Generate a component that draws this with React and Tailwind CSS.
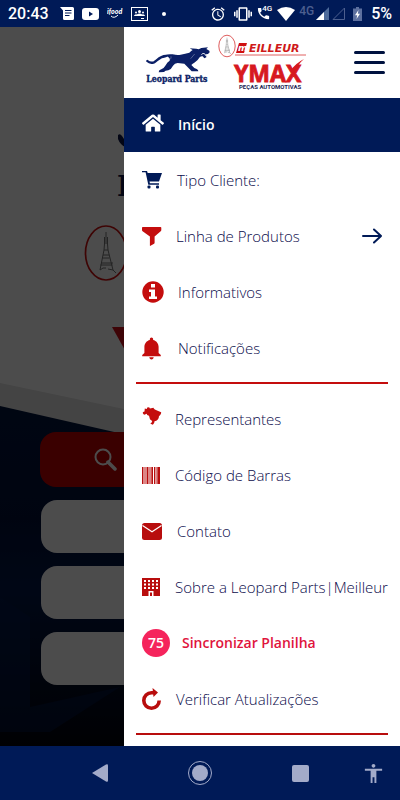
import { FaHome } from 'react-icons/fa';
import { IoMdNotifications } from 'react-icons/io';
import { GiBrazil } from 'react-icons/gi';
import { MdAlarm, MdVibration, MdPhoneInTalk, MdAccessibility } from 'react-icons/md';

const CartIcon = () => (
  <svg width="20" height="18" viewBox="0 0 20 18" fill="#001a57">
    <path d="M0 0h5l.7 2H20l-3 8.500H7.500l.4 1.700H17v1.500H6.300L3.600 1.300H0z" />
    <rect x="5.500" y="14.500" width="3" height="3" rx="1" />
    <rect x="14" y="14.500" width="3" height="3" rx="1" />
  </svg>
);

const FunnelIcon = () => (
  <svg width="20" height="19" viewBox="0 0 20 19" fill="#c40d0d">
    <path d="M.8 0h17.700q.8 0 .8.800v2.200q0 .8-.6 1.300L12.600 9.500v6.200q0 .6-.5 1L8.500 18.800q-.6.300-.6-.4V9.500L.6 4.300Q0 3.800 0 3V.8Q0 0 .8 0z" />
  </svg>
);

const InfoIcon = () => (
  <svg width="22" height="22" viewBox="0 0 22 22">
    <circle cx="11" cy="11" r="10.700" fill="#c40d0d" />
    <path d="M9 3h4v3.500H9zM7 8.500h6v7h2V18H7v-2.500h2V11H7z" fill="#fff" />
  </svg>
);

const BarcodeIcon = () => (
  <svg width="18" height="17" viewBox="0 0 18 17" fill="#b80d0d">
    <path d="M0 0h1.500v17H0zM2.500 0h1v17h-1zM4.500 0h2v17h-2zM7.500 0h1v17h-1zM9.300 0h1.700v17H9.300zM12 0h1v17h-1zM13.600 0h.9v17h-.9zM15.300 0H18v17h-2.700z" />
  </svg>
);

const MailIcon = () => (
  <svg width="20" height="17" viewBox="0 0 20 17">
    <rect width="20" height="17" rx="2.500" fill="#b80d0d" />
    <path d="M.5 2.500L10 8.800l9.500-6.300" fill="none" stroke="#fff" strokeWidth="1.200" />
  </svg>
);

const BuildingIcon = () => (
  <svg width="18" height="18" viewBox="0 0 18 18">
    <path d="M0 0h18v18H0z" fill="#b80d0d" />
    <g fill="#fff">
      {[2, 6, 10, 14].map(x => [2, 5.5, 9].map(y => <rect key={`${x}-${y}`} x={x} y={y} width="2" height="2" />))}
      <path d="M6.500 18v-5h5v5h-1.500v-3.500H8V18z" />
    </g>
  </svg>
);

const ReloadIcon = () => (
  <svg width="19" height="22" viewBox="0 0 19 22">
    <path d="M17.200 12.500A7.700 7.700 0 1 1 9.500 4.800h3" fill="none" stroke="#b80d0d" strokeWidth="3.600" />
    <path d="M10.500 0l5.500 4.500-4.500 4.500z" fill="#b80d0d" />
  </svg>
);

const ArrowIcon = () => (
  <svg width="20" height="16" viewBox="0 0 20 16" fill="none" stroke="#001a57" strokeWidth="2" strokeLinecap="round" strokeLinejoin="round">
    <path d="M1 8h18M12 1.500L19 8l-7 6.500" />
  </svg>
);

const mainItems = [
  { label: 'Tipo Cliente:', icon: <CartIcon />, box: 'w-[23px]' },
  { label: 'Linha de Produtos', icon: <FunnelIcon />, box: 'w-[22px]', arrow: true },
  { label: 'Informativos', icon: <InfoIcon />, box: 'w-6' },
  { label: 'Notificações', icon: <IoMdNotifications size={27} className="-ml-1 shrink-0" />, box: 'w-6' },
];

const otherItems = [
  { label: 'Representantes', icon: <GiBrazil size={20} className="mb-1.5" />, box: 'w-[21px]' },
  { label: 'Código de Barras', icon: <BarcodeIcon />, box: 'w-[21px]' },
  { label: 'Contato', icon: <MailIcon />, box: 'w-[23px]' },
  { label: 'Sobre a Leopard Parts|Meilleur', icon: <BuildingIcon />, box: 'w-[21px]' },
  {
    label: 'Sincronizar Planilha',
    icon: <span className="flex h-7 w-7 items-center justify-center rounded-full bg-[#f5245c] text-sm font-semibold text-white">75</span>,
    box: 'w-7',
    highlight: true,
  },
  { label: 'Verificar Atualizações', icon: <ReloadIcon />, box: 'w-[22px]' },
];

function MenuItem({ item }) {
  return (
    <li>
      <a href="#" className="flex h-14 items-center gap-3 pl-[18px] pr-[18px]">
        <span className={`flex shrink-0 items-center text-[#c40d0d] ${item.box}`}>{item.icon}</span>
        <span className={item.highlight
          ? 'flex-1 whitespace-nowrap text-sm font-semibold text-[#e0143c]'
          : 'whitespace-nowrap text-[15px] font-light text-[#0a0a4a]'}>
          {item.label}
        </span>
        {item.arrow && <span className="ml-auto"><ArrowIcon /></span>}
      </a>
    </li>
  );
}

function StatusBar() {
  return (
    <header className="flex h-[27px] shrink-0 items-center bg-[#001a57] pl-2 pr-2 font-['Roboto',sans-serif] text-white">
      <span className="w-[52px] text-base font-medium">20:43</span>
      <div className="flex items-center gap-2">
        <svg width="14" height="13" viewBox="0 0 14 13">
          <path d="M0 0h12.500Q14 0 14 1.500v10q0 1.500-1.500 1.500H4.500Q3 13 3 11.500V3.500z" fill="#fff" />
          <path d="M5 3.500h6.500M5 6h6.500M5 8.500h4.500" stroke="#001a57" strokeWidth="1" />
        </svg>
        <svg width="17" height="12" viewBox="0 0 17 12">
          <rect width="17" height="12" rx="3" fill="#fff" />
          <path d="M7 3.500v5L11 6z" fill="#001a57" />
        </svg>
        <svg width="16" height="14" viewBox="0 0 16 14">
          <text x="0" y="7" fill="#fff" fontSize="7" fontWeight="900" fontStyle="italic" fontFamily="Lato, sans-serif">ifood</text>
          <path d="M4 9q3 3 7-1" fill="none" stroke="#fff" />
        </svg>
        <svg width="17" height="14" viewBox="0 0 17 14" fill="#fff">
          <rect x=".5" y=".5" width="16" height="13" fill="none" stroke="#fff" />
          <circle cx="8.500" cy="4.500" r="1.500" />
          <circle cx="5" cy="5.500" r="1" />
          <circle cx="12" cy="5.500" r="1" />
          <path d="M2.800 9q1.200-2.200 3-1.500Q8.500 5.500 11.200 7.500q1.800-.7 3 1.500zM10 11h3v1h-3z" />
        </svg>
      </div>
      <span className="ml-3.5 h-1 w-1 rounded-full bg-white" />
      <div className="ml-auto flex items-center">
        <MdAlarm size={16} />
        <MdVibration size={18} className="ml-2" />
        <span className="relative ml-1 flex w-[17px]">
          <MdPhoneInTalk size={15} className="[clip-path:polygon(0_0,45%_0,45%_55%,100%_55%,100%_100%,0_100%)]" />
          <span className="absolute -top-0.5 left-1.5 text-[8px] leading-[10px] font-medium">4G</span>
        </span>
        <svg width="18" height="14" viewBox="0 0 18 14" className="ml-1" fill="#fff">
          <path d="M0 3Q9-3 18 3L9 14z" />
        </svg>
        <span className="ml-1 -mt-1.5 text-[12px] leading-4 font-medium text-[#4d5f8f]">4G</span>
        <svg width="13" height="13" viewBox="0 0 13 13" className="ml-0.5">
          <path d="M13 0v13H0z" fill="#4d6a9a" />
          <path d="M8 5v8H0z" fill="#fff" />
        </svg>
        <svg width="13" height="13" viewBox="0 0 13 13" className="ml-[3px]">
          <path d="M12.500 1v11.500H1z" fill="none" stroke="#4d5f8f" />
        </svg>
        <svg width="9" height="14" viewBox="0 0 9 14" className="ml-2">
          <path d="M3 0h3v1.500h3V14H0V1.500h3z" fill="#5d709f" />
          <path d="M5.500 3L2 8.300h2.200L3.500 12 7 6.700H4.800z" fill="#fff" />
        </svg>
        <span className="ml-[9px] text-base font-medium">5%</span>
      </div>
    </header>
  );
}

function Tower() {
  return (
    <>
      <ellipse cx="0" cy="0" rx="20.500" ry="27" fill="none" stroke="#cf1010" strokeWidth="1.700" />
      <path d="M0-21v12M-1.500-16v7L-2-3-6 17M1.500-16v7L2-3 7 17l3 3M-2-3h4M-3 2h6M-3.500 5h7M-5 10H7M-5.500 12h12M-6 17q3-3 6-2M2 16l5 1" fill="none" stroke="#777" strokeWidth="1" />
    </>
  );
}

function LeopardLogo() {
  return (
    <svg width="66" height="42" viewBox="66 46 198 126" aria-label="Leopard Parts">
      <path d="M70 103q8 8 20 4c10-5 16-18 36-19" fill="none" stroke="#0b1f66" strokeWidth="7" strokeLinecap="round" />
      <path fill="#0b1f66" d="M122 86q10-5 24-3 14 3 24 1 14-3 26-6 6-6 10-8l-9-5 20 1 7 2 8-4 20-2-5 5 9 5 1 5-5 5-6 1 1 9-6 3-5-6q-5-1-9 3-6 11-16 16-5 3-9 7 7 9 16 12 5 2 5 7h-20q-10-11-22-23l-20-2q-9 0-14 8-6 12-14 14-10 1-13 5l-16 1q0-7 8-9 8-3 13-12 5-10 12-14 2-9-6-12-8-1-15 5z" />
      <path d="M232 84l5-4 6 2 3 6" fill="none" stroke="#fff" strokeWidth="2.500" />
      <path d="M137 99q6-4 4-10M200 96l12-14" fill="none" stroke="#fff" strokeWidth="1.500" opacity=".6" />
      <text x="67" y="166" fill="#0b1f66" stroke="#0b1f66" strokeWidth="1" fontSize="26" fontWeight="700" fontFamily="'DejaVu Serif Condensed', 'DejaVu Serif', serif">Leopard Parts</text>
    </svg>
  );
}

function YmaxLogo() {
  return (
    <svg width="94" height="60" viewBox="0 0 94 60" aria-label="Meilleur Ymax">
      <g transform="translate(9 13) scale(.4)"><Tower /></g>
      <path d="M21 10h8l-3 10h-8z" fill="#cf1010" />
      <text x="20" y="18" fill="#fff" fontSize="9" fontWeight="700" fontStyle="italic" fontFamily="'DejaVu Sans', sans-serif">m</text>
      <text x="31" y="19" fill="#cf1a1a" fontSize="11" fontWeight="700" fontStyle="italic" fontFamily="'DejaVu Sans', sans-serif">EILLEUR</text>
      <path d="M17 22h71" stroke="#e06060" strokeWidth="1" />
      <text x="16" y="49" fill="#d7191f" stroke="#d7191f" strokeWidth=".8" fontSize="23" fontWeight="700" fontFamily="'Open Sans', sans-serif">YMAX</text>
      <path d="M72 38q6-8 14-12-6 5-10 14z" fill="#d7191f" />
      <text x="21" y="56" fill="#1c2454" fontSize="6" fontWeight="700" fontFamily="Roboto, sans-serif">PEÇAS AUTOMOTIVAS</text>
    </svg>
  );
}

function Home() {
  return (
    <div className="relative flex-1 overflow-hidden bg-[#000a26]">
      <svg className="absolute left-0 top-0 w-full" viewBox="0 0 400 720">
        <defs>
          <linearGradient id="night" x1="0" y1="0" x2="0" y2="1">
            <stop offset="0" stopColor="#00153f" />
            <stop offset=".35" stopColor="#001038" />
            <stop offset=".55" stopColor="#001748" />
            <stop offset="1" stopColor="#00030c" />
          </linearGradient>
        </defs>
        <path d="M0 370h400v350H0z" fill="url(#night)" />
        <path d="M0 570l30 20v90l90-20-70 45H0z" fill="#001a50" opacity=".5" />
        <path d="M0 0h400v470L0 379z" fill="#e3e3e3" />
        <path d="M0 0h400v440L0 356z" fill="#fff" />
        <path d="M118 108q2-2 4 1l4 6 14 3v5q-18 0-22-11z" fill="#0b1547" />
        <text x="117" y="169" fill="#0b1547" fontSize="27" fontWeight="700" fontFamily="'DejaVu Serif', serif">L</text>
        <g transform="translate(106 226)"><Tower /></g>
        <path d="M112 300h18l10 20v30z" fill="#cf1018" />
      </svg>
      <div className="relative flex flex-col gap-[13px] px-10 pt-[405px]">
        <button className="flex h-[55px] items-center rounded-2xl bg-[#c40000] pl-[54px]" aria-label="Pesquisar">
          <svg width="23" height="23" viewBox="0 0 23 23" fill="none" stroke="#fff">
            <circle cx="9" cy="9" r="7.500" strokeWidth="2" />
            <path d="M14 14l7 7" strokeWidth="3.500" strokeLinecap="round" />
          </svg>
        </button>
        {['Catálogo', 'Lançamentos', 'Contato'].map(name => (
          <button key={name} aria-label={name} className="ml-px h-[53px] rounded-2xl bg-white" />
        ))}
      </div>
    </div>
  );
}

function Drawer() {
  return (
    <aside className="absolute inset-y-0 right-0 w-[69%] bg-white">
      <div className="flex h-[71px] items-center pl-[22px] pr-[15px]">
        <LeopardLogo />
        <span className="ml-1.5"><YmaxLogo /></span>
        <button className="ml-auto flex w-[31px] flex-col gap-[7px]" aria-label="Menu">
          <span className="h-[3px] rounded-full bg-[#00123f]" />
          <span className="h-[3px] rounded-full bg-[#00123f]" />
          <span className="h-[3px] rounded-full bg-[#00123f]" />
        </button>
      </div>
      <nav>
        <a href="#" className="flex h-[54px] items-center gap-3 bg-[#001a57] pl-[18px] text-sm font-semibold text-white">
          <FaHome size={22} className="mb-1 w-6 pr-0.5" />
          Início
        </a>
        <ul>{mainItems.map(item => <MenuItem key={item.label} item={item} />)}</ul>
        <hr className="mx-3 mt-1.5 mb-[7px] border-t-2 border-[#c40d0d]" />
        <ul>{otherItems.map(item => <MenuItem key={item.label} item={item} />)}</ul>
        <hr className="mx-3 mt-1.5 border-t-2 border-[#b80d0d]" />
      </nav>
    </aside>
  );
}

function NavBar() {
  return (
    <footer className="grid h-[54px] shrink-0 grid-cols-[1fr_2fr_2fr_2fr_1fr] items-center justify-items-center bg-[#001a57] text-[#a3abc9]">
      <button className="col-start-2" aria-label="Voltar">
        <svg width="16" height="18" viewBox="0 0 16 18" fill="currentColor"><path d="M0 9L14 .5q2-1 2 1v15q0 2-2 1z" /></svg>
      </button>
      <button aria-label="Início">
        <svg width="24" height="24" viewBox="0 0 24 24">
          <circle cx="12" cy="12" r="11.500" fill="none" stroke="currentColor" />
          <circle cx="12" cy="12" r="8" fill="currentColor" />
        </svg>
      </button>
      <button aria-label="Recentes" className="h-[17px] w-[17px] rounded-xs bg-[#a3abc9]" />
      <button aria-label="Acessibilidade" className="pr-1"><MdAccessibility size={23} /></button>
    </footer>
  );
}

export default function App() {
  return (
    <div className="flex min-h-screen flex-col font-['Open_Sans',sans-serif]">
      <StatusBar />
      <main className="relative flex flex-1 flex-col">
        <Home />
        <div className="absolute inset-0 bg-black/70" />
        <Drawer />
      </main>
      <NavBar />
    </div>
  );
}
